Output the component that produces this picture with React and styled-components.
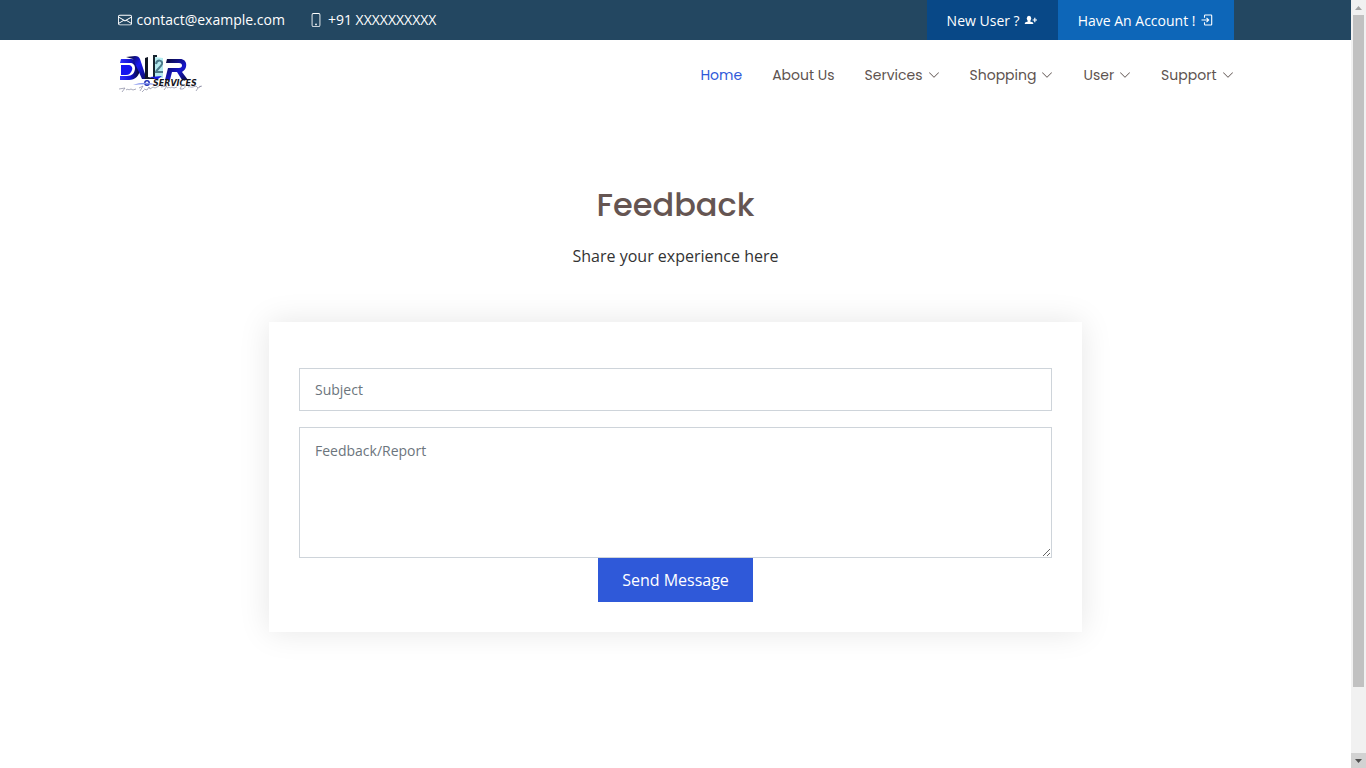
import React from "react";
import styled, { createGlobalStyle } from "styled-components";
import { BsEnvelope, BsPhone, BsChevronDown } from "react-icons/bs";

const GlobalStyle = createGlobalStyle`
  *, *::before, *::after { box-sizing: border-box; }
  body {
    margin: 0;
    background: #fff;
    color: #333;
    font: 16px/24px "Open Sans", sans-serif;
  }
  a { color: inherit; text-decoration: none; }
`;

const Shell = styled.div`
  display: flex;
  min-height: 100vh;
`;

const Page = styled.div`
  flex: 1;
  min-width: 0;
`;

const Container = styled.div`
  display: flex;
  align-items: center;
  justify-content: space-between;
  width: 100%;
  max-width: 1140px;
  margin: 0 auto;
  padding: 0 12px;
`;

const TopBar = styled.div`
  background: #234761;
  color: #fff;
  font-size: 14px;
`;

const ContactList = styled.div`
  display: flex;
  gap: 24px;
`;

const ContactLink = styled.a`
  display: flex;
  align-items: center;
  gap: 5px;
`;

const AccountLinks = styled.div`
  display: flex;
`;

const AccountLink = styled.a`
  display: flex;
  align-items: center;
  gap: 4px;
  height: 40px;
  padding: 2px 20px 0;
  background: ${(p) => (p.$primary ? "#0d66b8" : "#084887")};
`;

const Header = styled.header`
  display: flex;
  height: 70px;
`;

const LogoLink = styled.a`
  display: flex;
  svg { display: block; }
`;

const Nav = styled.nav`
  display: flex;
  gap: 30px;
`;

const NavLink = styled.a`
  display: flex;
  align-items: center;
  gap: 5px;
  font: 14px/24px Poppins, Inter, sans-serif;
  color: ${(p) => (p.$active ? "#2f59d9" : "#5e5350")};
`;

const Section = styled.main`
  padding: 72px 12px 60px;
  text-align: center;
`;

const Title = styled.h1`
  margin: 0 0 16px;
  color: #655552;
  font: 500 32px/46px Poppins, Inter, sans-serif;
`;

const Intro = styled.p`
  margin: 0 0 54px;
`;

const Card = styled.form`
  display: flex;
  flex-direction: column;
  width: 100%;
  max-width: 813px;
  margin: 0 auto;
  padding: 46px 30px 30px;
  background: #fff;
  box-shadow: 0 0 30px rgba(0, 0, 0, 0.1);
`;

const fieldStyle = `
  display: block;
  width: 100%;
  border: 1px solid #ced4da;
  border-radius: 0;
  background: #fff;
  color: #212529;
  font: 14px/21px "Open Sans", sans-serif;
  &::placeholder { color: #6c757d; opacity: 1; }
`;

const TextInput = styled.input`
  ${fieldStyle}
  height: 43px;
  margin-bottom: 16px;
  padding: 10px 15px;
`;

const TextArea = styled.textarea`
  ${fieldStyle}
  height: 131px;
  padding: 12px 15px;
  resize: vertical;
`;

const SubmitButton = styled.button`
  align-self: center;
  padding: 10px 24px;
  border: 0;
  background: #2f59d9;
  color: #fff;
  font: 16px/24px "Open Sans", sans-serif;
`;

const ScrollTrack = styled.div`
  position: sticky;
  top: 0;
  display: flex;
  flex-direction: column;
  flex: none;
  width: 15px;
  height: 100vh;
  background: #f1f1f1;
`;

const ScrollArrow = styled.div`
  display: flex;
  align-items: center;
  justify-content: center;
  height: 15px;
  background: ${(p) => (p.$lit ? "#d2d2d2" : "#f1f1f1")};
  color: ${(p) => (p.$lit ? "#505050" : "#a3a3a3")};
`;

const ScrollRail = styled.div`
  flex: 1;
  padding: 0 2px;
`;

const ScrollThumb = styled.div`
  height: 91%;
  background: #c1c1c1;
`;

const navItems = [
  { label: "Home", active: true },
  { label: "About Us" },
  { label: "Services", menu: true },
  { label: "Shopping", menu: true },
  { label: "User", menu: true },
  { label: "Support", menu: true },
];

function UserPlusIcon() {
  return (
    <svg width="14" height="14" viewBox="0 0 14 14" fill="currentColor" aria-hidden="true">
      <ellipse cx="5" cy="4.4" rx="2.2" ry="2.6" />
      <path d="M3.8 6.2h2.4v1.3l2.200.8c.7.3.9.7.9 1.700H.8c0-1 .2-1.400.9-1.700l2.100-.8z" />
      <path d="M10.200 3.800h1.200v1.600H13v1.200h-1.600v1.600h-1.200V6.600H8.600V5.400h1.600z" />
    </svg>
  );
}

function LoginIcon() {
  return (
    <svg width="14" height="14" viewBox="0 0 14 14" fill="none" stroke="currentColor" strokeWidth="1.1" aria-hidden="true">
      <path d="M4.500 3.800V1.700c0-.5.2-.7.7-.7h5.800c.5 0 .7.200.7.700v8.600c0 .5-.2.700-.7.700H5.200c-.5 0-.7-.2-.7-.7V8.200" />
      <path d="M1.500 6h7M6.500 3.800L8.700 6 6.500 8.200" />
    </svg>
  );
}

function Logo() {
  return (
    <svg width="84" height="42" viewBox="0 0 84 42" role="img" aria-label="DV2R Services">
      <defs>
        <linearGradient id="bowl" x1="0" y1="0" x2="1" y2="0">
          <stop offset="0" stopColor="#3030f8" />
          <stop offset=".5" stopColor="#1212d8" />
          <stop offset="1" stopColor="#07072c" />
        </linearGradient>
        <linearGradient id="vee" x1="0" y1="0" x2="1" y2="1">
          <stop offset="0" stopColor="#07071c" />
          <stop offset=".5" stopColor="#1818f4" />
          <stop offset="1" stopColor="#0d0d60" />
        </linearGradient>
        <linearGradient id="arr" x1="0" y1="0" x2="1" y2="1">
          <stop offset="0" stopColor="#090930" />
          <stop offset=".6" stopColor="#1717ce" />
          <stop offset="1" stopColor="#090938" />
        </linearGradient>
      </defs>
      <path d="M3 5h10c6 0 9 4 9 9 0 8-5 12-11 12H2v-4h7c5 0 8-3 8-8 0-3-2-5-5-5H2z" fill="url(#bowl)" />
      <path d="M3 11h7c3 0 5 2 4 5-1 3-3 5-6 5H3z" fill="#1515ef" />
      <path d="M8 3l9-1c3 0 4 1 5 3l5 15 1 5h-4L15 5z" fill="url(#vee)" />
      <path d="M30 4l5-1v20h-6z" fill="#fff" />
      <path d="M27 4l3-1v20l5 1v1h-8z" fill="#101523" />
      <path d="M36 3l9 1v20h-9z" fill="#b5ebef" />
      <path d="M35 1h4v2h-2v21h-2z" fill="#15232d" />
      <path d="M38 10c1-5 7-4 6 0-1 3-5 5-6 8h7" fill="none" stroke="#4c7a8a" strokeWidth="2" />
      <path d="M49 5h13c8 0 8 10 2 13l6 8h-6l-5-8h-5l-2 8h-5l3-12h11c4 0 4-5 0-5H48z" fill="url(#arr)" />
      <path d="M32 23l12-1-4 3h-5z" fill="#1919dd" />
      <path d="M28 24h8v1h-8z" fill="#161628" />
      <circle cx="29" cy="29" r="2.200" fill="#fff" stroke="#1b2bb4" strokeWidth="1.500" />
      <path d="M15 31c8-3 16-3 24 0-9-1-16-1-24 0z" fill="#8797ed" />
      <text x="35" y="32" fontFamily="'DejaVu Sans'" fontSize="8" fontWeight="700" fontStyle="italic" fill="#15151d">SERVICES</text>
      <path d="M1 35l6-1-3 4m4-2c2-2 2 1 5-1l2 1 3-1m3-1l4-2-3 5m4-2l3 1 2-3 1 2 3-2 2 1 4-2m-15 4l-2 2m19-5l6-1-3 4m3-2c2-2 3 1 5-1l2 1 3-1m4-2c6-1 5 5-1 4l2-4m6 2c2-1 3 1 5 0l3-1 2 2 3-2m-3 2l-2 3m3-4l3-1" fill="none" stroke="#85879f" strokeWidth=".7" />
    </svg>
  );
}

export default function App() {
  return (
    <>
      <GlobalStyle />
      <Shell>
        <Page>
          <TopBar>
            <Container>
              <ContactList>
                <ContactLink href="mailto:contact@example.com">
                  <BsEnvelope size={14} />contact@example.com
                </ContactLink>
                <ContactLink href="#phone">
                  <BsPhone size={14} />+91 XXXXXXXXXX
                </ContactLink>
              </ContactList>
              <AccountLinks>
                <AccountLink href="#register">New User ? <UserPlusIcon /></AccountLink>
                <AccountLink href="#login" $primary>Have An Account ! <LoginIcon /></AccountLink>
              </AccountLinks>
            </Container>
          </TopBar>
          <Header>
            <Container>
              <LogoLink href="#home"><Logo /></LogoLink>
              <Nav>
                {navItems.map((item) => (
                  <NavLink key={item.label} href={"#" + item.label} $active={item.active}>
                    {item.label}
                    {item.menu && <BsChevronDown size={12} />}
                  </NavLink>
                ))}
              </Nav>
            </Container>
          </Header>
          <Section>
            <Title>Feedback</Title>
            <Intro>Share your experience here</Intro>
            <Card onSubmit={(e) => e.preventDefault()}>
              <TextInput type="text" aria-label="Subject" placeholder="Subject" />
              <TextArea aria-label="Feedback/Report" placeholder="Feedback/Report" />
              <SubmitButton type="submit">Send Message</SubmitButton>
            </Card>
          </Section>
        </Page>
        <ScrollTrack aria-hidden="true">
          <ScrollArrow>
            <svg width="7" height="4"><path d="M0 4L3.5 0 7 4z" fill="currentColor" /></svg>
          </ScrollArrow>
          <ScrollRail><ScrollThumb /></ScrollRail>
          <ScrollArrow $lit>
            <svg width="7" height="4"><path d="M0 0h7L3.5 4z" fill="currentColor" /></svg>
          </ScrollArrow>
        </ScrollTrack>
      </Shell>
    </>
  );
}
